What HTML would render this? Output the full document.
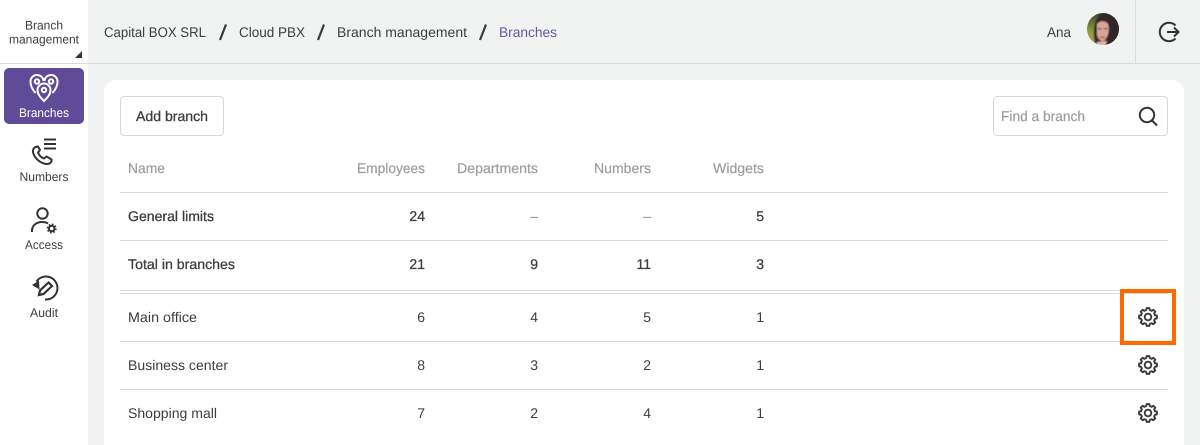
<!DOCTYPE html>
<html><head><meta charset="utf-8">
<style>
html,body{margin:0;padding:0;width:1200px;height:445px;overflow:hidden;background:#f1f3f3}
svg{display:block}
text{font-family:"Liberation Sans",sans-serif;font-size:14px;fill:#3d3d3f}
.g{fill:#9c9c9e;stroke:#9c9c9e;stroke-width:.2px}
.m{stroke:#3d3d3f;stroke-width:.3px;paint-order:stroke}
.s{font-size:12.5px}
.e{text-anchor:end}
.l{fill:#d9d9d9}
</style></head><body>
<svg width="1200" height="445" viewBox="0 0 1200 445" xmlns="http://www.w3.org/2000/svg" text-rendering="geometricPrecision">
<defs>
<g id="gear" fill="none" stroke="#3a3a3c" stroke-width="1.9" stroke-linejoin="round">
<path d="M-1.41-8.89 L1.41-8.89 L1.74-6.99 L3.71-6.17 L5.29-7.28 L7.28-5.29 L6.17-3.71 L6.99-1.74 L8.89-1.41 L8.89 1.41 L6.99 1.74 L6.17 3.71 L7.28 5.29 L5.29 7.28 L3.71 6.17 L1.74 6.99 L1.41 8.89 L-1.41 8.89 L-1.74 6.99 L-3.71 6.17 L-5.29 7.28 L-7.28 5.29 L-6.17 3.71 L-6.99 1.74 L-8.89 1.41 L-8.89 -1.41 L-6.99 -1.74 L-6.17 -3.71 L-7.28 -5.29 L-5.29 -7.28 L-3.71 -6.17 L-1.74 -6.99Z"/>
<circle r="3.3"/>
</g>
<clipPath id="av"><circle cx="1103" cy="29" r="16"/></clipPath>
<filter id="bl" x="-10%" y="-10%" width="120%" height="120%"><feGaussianBlur stdDeviation="0.8"/></filter>
<linearGradient id="bgav" x1="0" y1="0" x2="0" y2="1"><stop offset="0" stop-color="#34452a"/><stop offset=".55" stop-color="#8f9a3a"/><stop offset="1" stop-color="#a8a040"/></linearGradient>
</defs>
<!-- backgrounds -->
<rect x="0" y="0" width="1200" height="445" fill="#f1f3f3"/>
<rect x="0" y="0" width="88" height="445" fill="#fff"/>
<rect x="0" y="63" width="1200" height="1" fill="#d9dcdc"/>
<rect x="1135" y="0" width="1" height="63" fill="#d9dcdc"/>
<rect x="104" y="80" width="1080" height="380" rx="12" fill="#fff"/>
<!-- sidebar top -->
<text x="44" y="29.500" text-anchor="middle" class="s" textLength="38" lengthAdjust="spacingAndGlyphs">Branch</text>
<text x="44" y="43.500" text-anchor="middle" class="s" textLength="70" lengthAdjust="spacingAndGlyphs">management</text>
<path d="M75 58h7v-7z" fill="#333"/>
<!-- branches item -->
<rect x="4" y="68" width="80" height="56" rx="5" fill="#5f4b98"/>
<g fill="none" stroke="#fff" stroke-width="2">
<path d="M35.500 93 C32 89 30.500 86 30.500 82 A6.500 6.500 0 0 1 43.500 81"/>
<path d="M52.500 93 C56 89 57.500 86 57.500 82 A6.500 6.500 0 0 0 44.500 81"/>
<circle cx="37" cy="81.500" r="2.200"/>
<circle cx="51" cy="81.500" r="2.200"/>
<path d="M44 101 C40.500 97.500 37.500 94.500 37.500 90 A6.500 6.500 0 0 1 50.500 90 C50.500 94.500 47.500 97.500 44 101Z" fill="#5f4b98"/>
<circle cx="44" cy="90" r="2.200"/>
</g>
<text x="44" y="117" text-anchor="middle" class="s" style="fill:#fff" textLength="50" lengthAdjust="spacingAndGlyphs">Branches</text>
<!-- numbers icon -->
<g fill="#333"><rect x="44" y="138.500" width="12" height="2"/><rect x="44" y="143" width="12" height="2"/><rect x="44" y="147.500" width="12" height="2"/></g>
<path d="M38 146.500 C34.500 146.500 32.500 149 33 152 C34 158 41 164 47 164 C50 164 52 162 51.500 159.500 L46.500 156.500 L44 158.500 C41 157.500 39 155 38 152.500 L40 150 Z" fill="none" stroke="#333" stroke-width="2" stroke-linejoin="round"/>
<text x="44" y="181" text-anchor="middle" class="s" textLength="49" lengthAdjust="spacingAndGlyphs">Numbers</text>
<!-- access icon -->
<g fill="none" stroke="#333" stroke-width="2">
<circle cx="42.500" cy="213.500" r="5.200"/>
<path d="M32 232 V230.500 C32 225.500 36.500 222 42 222 C44.500 222 46.500 222.500 48 223.500"/>
<circle cx="51.700" cy="228.500" r="2.800"/>
<circle cx="51.700" cy="228.500" r="4.200" stroke-dasharray="1.650 1.650" stroke-width="1.600"/>
</g>
<text x="44" y="249" text-anchor="middle" class="s" textLength="38" lengthAdjust="spacingAndGlyphs">Access</text>
<!-- audit icon -->
<g fill="none" stroke="#333" stroke-width="2">
<path d="M36.500 281.500 A11.500 11.500 0 1 1 45 299.500"/>
<path d="M39 295 L40 290.500 L48.500 282.500 L52 286 L43.500 294 Z" stroke-width="2.200"/>
</g>
<path d="M32 285 L39 280.500 L39.500 289.500Z" fill="#333"/>
<text x="44" y="317" text-anchor="middle" class="s" textLength="28" lengthAdjust="spacingAndGlyphs">Audit</text>
<!-- breadcrumb -->
<text x="104" y="37" textLength="102" lengthAdjust="spacingAndGlyphs">Capital BOX SRL</text>
<path d="M220 40 L226 24.500" stroke="#3a3a3c" stroke-width="2.200"/>
<text x="239" y="37" textLength="66" lengthAdjust="spacingAndGlyphs">Cloud PBX</text>
<path d="M318 40 L324 24.500" stroke="#3a3a3c" stroke-width="2.200"/>
<text x="337" y="37" textLength="130" lengthAdjust="spacingAndGlyphs">Branch management</text>
<path d="M480 40 L486 24.500" stroke="#3a3a3c" stroke-width="2.200"/>
<text x="499" y="37" textLength="58" lengthAdjust="spacingAndGlyphs" style="fill:#6a55a5">Branches</text>
<!-- user -->
<text x="1047" y="37" textLength="24" lengthAdjust="spacingAndGlyphs">Ana</text>
<g clip-path="url(#av)">
<rect x="1087" y="13" width="32" height="32" fill="url(#bgav)"/>
<g filter="url(#bl)">
<path d="M1096 46 C1093 36 1093 22 1099 16 C1104 11 1114 12 1120 20 L1120 46Z" fill="#30282a"/>
<path d="M1097 24 C1100 20 1106 21 1108 24 C1110 30 1108 37 1104 41 C1101 42 1098 39 1097 35Z" fill="#d9a595"/>
<path d="M1097 42 L1107 41 L1105 46 L1097 46Z" fill="#e0b8a8"/>
<rect x="1098" y="28" width="3.500" height="1.500" fill="#4d5560"/>
<rect x="1104" y="28" width="3.500" height="1.500" fill="#4d5560"/>
<rect x="1100" y="36.500" width="5" height="1.500" fill="#b5505a"/>
</g>
</g>
<!-- logout -->
<path d="M1175.500 25.500 A9.200 9.200 0 1 0 1175.500 38.500" fill="none" stroke="#333" stroke-width="2"/>
<path d="M1167 32 H1178.500 M1174 27.500 L1178.500 32 L1174 36.500" fill="none" stroke="#333" stroke-width="2"/>
<!-- add button -->
<rect x="120.500" y="96.500" width="103" height="39" rx="4" fill="#fff" stroke="#d6d6d6"/>
<text x="136" y="121" textLength="72" lengthAdjust="spacingAndGlyphs" class="m">Add branch</text>
<!-- search -->
<rect x="993.500" y="96.500" width="174" height="39" rx="4" fill="#fff" stroke="#d6d6d6"/>
<text x="1001" y="121" class="g" textLength="84" lengthAdjust="spacingAndGlyphs">Find a branch</text>
<circle cx="1147" cy="115" r="7.200" fill="none" stroke="#333" stroke-width="2"/>
<path d="M1152 120.500 L1157 125.500" stroke="#333" stroke-width="2"/>
<!-- table head -->
<text x="128" y="173" class="g" textLength="37" lengthAdjust="spacingAndGlyphs">Name</text>
<text x="357" y="173" class="g" textLength="68" lengthAdjust="spacingAndGlyphs">Employees</text>
<text x="457" y="173" class="g" textLength="81" lengthAdjust="spacingAndGlyphs">Departments</text>
<text x="594" y="173" class="g" textLength="57" lengthAdjust="spacingAndGlyphs">Numbers</text>
<text x="713" y="173" class="g" textLength="51" lengthAdjust="spacingAndGlyphs">Widgets</text>
<!-- lines -->
<rect class="l" x="120" y="192" width="1048" height="1"/>
<rect class="l" x="120" y="240" width="1048" height="1"/>
<rect class="l" x="120" y="290" width="1048" height="1"/>
<rect class="l" x="120" y="293" width="1048" height="1"/>
<rect class="l" x="120" y="341" width="1048" height="1"/>
<rect class="l" x="120" y="389" width="1048" height="1"/>
<!-- general limits -->
<text x="128" y="221" class="m" textLength="86" lengthAdjust="spacingAndGlyphs">General limits</text>
<text x="425" y="221" class="e m">24</text>
<text x="538" y="221" class="e g">–</text>
<text x="651" y="221" class="e g">–</text>
<text x="764" y="221" class="e m">5</text>
<!-- total -->
<text x="128" y="269" class="m" textLength="107" lengthAdjust="spacingAndGlyphs">Total in branches</text>
<text x="425" y="269" class="e m">21</text>
<text x="538" y="269" class="e m">9</text>
<text x="651" y="269" class="e m">11</text>
<text x="764" y="269" class="e m">3</text>
<!-- rows -->
<text x="128" y="322" textLength="69" lengthAdjust="spacingAndGlyphs">Main office</text>
<text x="425" y="322" class="e">6</text><text x="538" y="322" class="e">4</text><text x="651" y="322" class="e">5</text><text x="764" y="322" class="e">1</text>
<text x="128" y="370" textLength="100" lengthAdjust="spacingAndGlyphs">Business center</text>
<text x="425" y="370" class="e">8</text><text x="538" y="370" class="e">3</text><text x="651" y="370" class="e">2</text><text x="764" y="370" class="e">1</text>
<text x="128" y="418" textLength="89" lengthAdjust="spacingAndGlyphs">Shopping mall</text>
<text x="425" y="418" class="e">7</text><text x="538" y="418" class="e">2</text><text x="651" y="418" class="e">4</text><text x="764" y="418" class="e">1</text>
<!-- gears -->
<use href="#gear" x="1148" y="317"/>
<use href="#gear" x="1148" y="365"/>
<use href="#gear" x="1148" y="413"/>
<!-- highlight -->
<rect x="1122" y="291" width="52" height="52" fill="none" stroke="#ff6a00" stroke-width="4"/>
</svg>
</body></html>
